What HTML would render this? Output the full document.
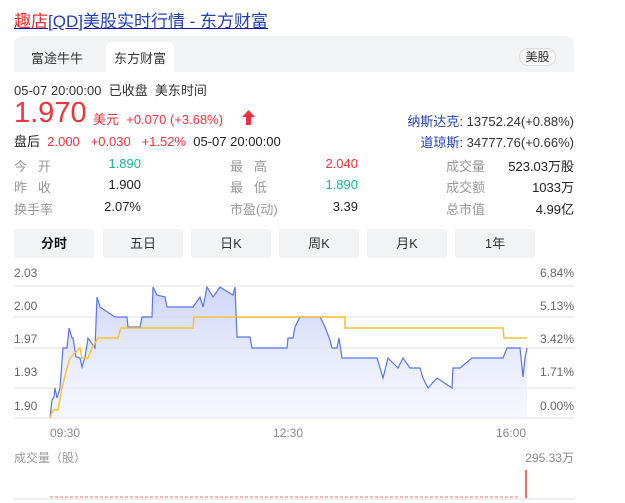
<!DOCTYPE html>
<html><head><meta charset="utf-8"><style>
body{margin:0;width:625px;height:503px;background:#fff;font-family:"Liberation Sans","Noto Sans CJK SC",sans-serif;position:relative;overflow:hidden;color:#222}
.a{position:absolute;white-space:nowrap}
.t{font-size:13px}
.g{color:#999}
.btn{position:absolute;top:229px;width:80px;height:29px;background:#f2f3f5;border-radius:3px;font-size:13px;text-align:center;line-height:29px;color:#333}
</style></head><body>
<div class="a" style="left:14px;top:7px;font-size:17px;text-decoration:underline;color:#1a0dab"><span style="color:#e0302e">趣店</span><span style="color:#2440b3">[QD]美股实时行情 - 东方财富</span></div>
<div class="a" style="left:14px;top:36px;width:560px;height:36px;background:#f2f3f5;border-radius:8px 8px 0 0"></div>
<div class="a t" style="left:31px;top:48px;color:#333">富途牛牛</div>
<div class="a" style="left:106px;top:42px;width:68px;height:30px;background:#fff;border-radius:6px 6px 0 0"></div>
<div class="a t" style="left:114px;top:48px;color:#333">东方财富</div>
<div class="a" style="left:519px;top:48px;width:35px;height:16px;border:1px solid #ddd;border-radius:9px;font-size:12px;text-align:center;line-height:16px;color:#333;background:#f6f6f6">美股</div>
<div class="a t" style="left:14px;top:80px;color:#333">05-07 20:00:00&nbsp; 已收盘&nbsp; 美东时间</div>
<div class="a" style="left:14px;top:97px;font-size:29px;color:#f0323c">1.970</div>
<div class="a t" style="left:93px;top:109px;color:#f0323c">美元&nbsp; +0.070 (+3.68%)</div>
<svg class="a" style="left:241px;top:109px" width="15" height="17" viewBox="0 0 15 17"><path d="M7.5 1 L14 8 H10 V16 H5 V8 H1 Z" fill="#f0323c"/></svg>
<div class="a t" style="left:14px;top:131px"><span>盘后</span>&nbsp; <span style="color:#f0323c">2.000&nbsp;&nbsp; +0.030&nbsp;&nbsp; +1.52%</span>&nbsp;&nbsp;05-07 20:00:00</div>
<div class="a t" style="right:51px;top:111px;color:#333"><span style="color:#2440b3">纳斯达克</span>: 13752.24(+0.88%)</div>
<div class="a t" style="right:51px;top:132px;color:#333"><span style="color:#2440b3">道琼斯</span>: 34777.76(+0.66%)</div>

<div class="a t g" style="left:14px;top:156px">今&nbsp;&nbsp;&nbsp;开</div>
<div class="a t g" style="left:14px;top:177px">昨&nbsp;&nbsp;&nbsp;收</div>
<div class="a t g" style="left:14px;top:199px">换手率</div>
<div class="a t" style="right:484px;top:156px;color:#14b5a0">1.890</div>
<div class="a t" style="right:484px;top:177px">1.900</div>
<div class="a t" style="right:484px;top:199px">2.07%</div>
<div class="a t g" style="left:230px;top:156px">最&nbsp;&nbsp;&nbsp;高</div>
<div class="a t g" style="left:230px;top:177px">最&nbsp;&nbsp;&nbsp;低</div>
<div class="a t g" style="left:230px;top:199px">市盈(动)</div>
<div class="a t" style="right:267px;top:156px;color:#f0323c">2.040</div>
<div class="a t" style="right:267px;top:177px;color:#14b5a0">1.890</div>
<div class="a t" style="right:267px;top:199px">3.39</div>
<div class="a t g" style="left:446px;top:156px">成交量</div>
<div class="a t g" style="left:446px;top:177px">成交额</div>
<div class="a t g" style="left:446px;top:199px">总市值</div>
<div class="a t" style="right:51px;top:156px">523.03万股</div>
<div class="a t" style="right:51px;top:177px">1033万</div>
<div class="a t" style="right:51px;top:199px">4.99亿</div>

<div class="btn" style="left:14px;font-weight:bold;color:#111">分时</div>
<div class="btn" style="left:103px">五日</div>
<div class="btn" style="left:191px">日K</div>
<div class="btn" style="left:279px">周K</div>
<div class="btn" style="left:367px">月K</div>
<div class="btn" style="left:455px">1年</div>

<div class="a" style="left:14px;top:267px;font-size:12px;color:#666;line-height:1">2.03</div>
<div class="a" style="left:14px;top:300px;font-size:12px;color:#666;line-height:1">2.00</div>
<div class="a" style="left:14px;top:333px;font-size:12px;color:#666;line-height:1">1.97</div>
<div class="a" style="left:14px;top:366px;font-size:12px;color:#666;line-height:1">1.93</div>
<div class="a" style="left:14px;top:400px;font-size:12px;color:#666;line-height:1">1.90</div>
<div class="a" style="right:51px;top:267px;font-size:12px;color:#666;line-height:1">6.84%</div>
<div class="a" style="right:51px;top:300px;font-size:12px;color:#666;line-height:1">5.13%</div>
<div class="a" style="right:51px;top:333px;font-size:12px;color:#666;line-height:1">3.42%</div>
<div class="a" style="right:51px;top:366px;font-size:12px;color:#666;line-height:1">1.71%</div>
<div class="a" style="right:51px;top:400px;font-size:12px;color:#666;line-height:1">0.00%</div>

<svg class="a" style="left:0;top:0" width="625" height="503">
<defs><linearGradient id="gr" x1="0" y1="0" x2="0" y2="1"><stop offset="0" stop-color="#c9d1f7" stop-opacity=".9"/><stop offset="1" stop-color="#eef1fd" stop-opacity=".5"/></linearGradient></defs>
<g stroke="#f0f0f0" stroke-width="2">
<line x1="14" y1="286" x2="575" y2="286"/><line x1="14" y1="317" x2="575" y2="317"/><line x1="14" y1="348" x2="575" y2="348"/><line x1="14" y1="388" x2="575" y2="388"/><line x1="14" y1="418" x2="575" y2="418"/>
</g>
<path fill="url(#gr)" d="M50 418 L52 400 54 397 55 388 57 398 60 388 63 348 67 348 69 328 72 338 73 338 76 357 80 358 82 367 85 357 88 338 95 348 97 297 100 307 115 317 127 317 128 327 140 327 142 317 152 317 153 287 157 295 165 297 167 307 193 307 200 297 203 307 207 287 213 297 220 287 233 295 235 287 237 337 250 337 252 348 287 348 288 338 293 338 295 327 300 317 320 317 325 327 330 340 332 348 337 348 339 338 342 358 377 358 383 378 388 358 398 368 403 358 410 368 420 368 423 378 428 388 437 378 452 388 453 368 460 368 472 358 503 358 507 348 520 348 523 377 525 358 527 348 L527 418 Z"/>
<polyline fill="none" stroke="#5b74e8" stroke-width="1.2" points="50,418 52,400 54,397 55,388 57,398 60,388 63,348 67,348 69,328 72,338 73,338 76,357 80,358 82,367 85,357 88,338 95,348 97,297 100,307 115,317 127,317 128,327 140,327 142,317 152,317 153,287 157,295 165,297 167,307 193,307 200,297 203,307 207,287 213,297 220,287 233,295 235,287 237,337 250,337 252,348 287,348 288,338 293,338 295,327 300,317 320,317 325,327 330,340 332,348 337,348 339,338 342,358 377,358 383,378 388,358 398,368 403,358 410,368 420,368 423,378 428,388 437,378 452,388 453,368 460,368 472,358 503,358 507,348 520,348 523,377 525,358 527,348"/>
<polyline fill="none" stroke="#f7c23a" stroke-width="1.5" points="50,418 53,410 58,410 62,388 67,368 70,358 80,348 82,358 88,358 92,348 98,338 118,338 121,328 193,328 194,317 345,317 345,328 503,328 504,338 527,338"/>
<line x1="14" y1="499" x2="575" y2="499" stroke="#eee" stroke-width="2"/>
<line x1="50" y1="497" x2="520" y2="497" stroke="#f3b8b8" stroke-width="2" stroke-dasharray="3 2"/>
<line x1="526" y1="470" x2="526" y2="498" stroke="#f0323c" stroke-width="1.5"/>
</svg>
<div class="a" style="left:50px;top:426px;font-size:12px;color:#888">09:30</div>
<div class="a" style="left:273px;top:426px;font-size:12px;color:#888">12:30</div>
<div class="a" style="left:496px;top:426px;font-size:12px;color:#888">16:00</div>
<div class="a" style="left:14px;top:449px;font-size:12px;color:#999">成交量（股）</div>
<div class="a" style="right:51px;top:449px;font-size:12px;color:#888">295.33万</div>
</body></html>
